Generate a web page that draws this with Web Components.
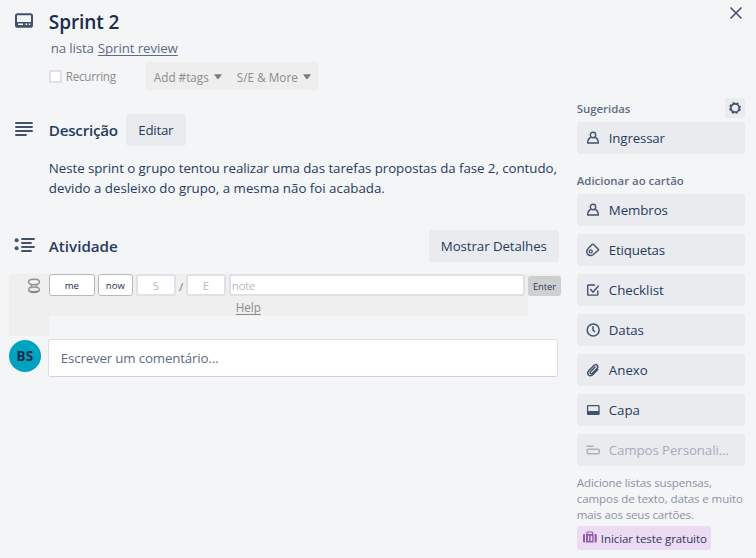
<!DOCTYPE html>
<html lang="pt-BR">
<head>
<meta charset="utf-8">
<title>Sprint 2</title>
<style>
html,body{margin:0;height:100%;overflow:hidden;background:#f4f5f7}
body{font-family:"Open Sans","Noto Sans",sans-serif;font-size:13.3px;line-height:20px;color:#263b60}
</style>
</head>
<body>
<card-dialog></card-dialog>
<script>
const define = (name, html, init) => customElements.define(name, class extends HTMLElement {
  connectedCallback() {
    if (this.shadowRoot) return;
    const t = document.createElement('template');
    t.innerHTML = html;
    this.attachShadow({mode: 'open'}).append(t.content.cloneNode(true));
    if (init) init(this, this.shadowRoot);
  }
});

/* Single-line label whose tracking is set so that it spans a given width. */
define('fit-text', `<style>:host{display:inline-block;white-space:nowrap;flex:none}span{display:inline-block;margin-left:-.2px}:host([underlined]) span{text-decoration:underline;text-decoration-thickness:1px;text-underline-offset:2px;text-decoration-skip-ink:none}</style><span><slot></slot></span>`,
(host, root) => {
  const s = root.querySelector('span'), w = parseFloat(host.getAttribute('w'));
  const n = host.textContent.length;
  if (w) {
    s.style.letterSpacing = (w - s.getBoundingClientRect().width) / n + 'px';
    host.style.width = w + 'px';
  }
});

const icons = {
  card: [20,16,'<rect x="2" y="1.200" width="16" height="12.600" rx="1.600" fill="none" stroke="currentColor" stroke-width="2"/><path d="M2 9h16v4.500H2z" fill="currentColor"/><path d="M4 11.300h5M11.500 11.300h1.700M14.800 11.300h1.400" stroke="#f4f5f7" stroke-width="1.600"/>'],
  lines: [20,16,'<path d="M2 2h16M2 6h16M2 10h16M2 14h10" stroke="currentColor" stroke-width="1.900" stroke-linecap="round"/>'],
  activity: [22,16,'<circle cx="2.600" cy="3.200" r="2" fill="currentColor"/><circle cx="2.600" cy="11.200" r="2" fill="currentColor"/><path d="M8 2h12M8 6h9M8 10h12M8 14h9" stroke="currentColor" stroke-width="1.900" stroke-linecap="round"/>'],
  close: [14,14,'<path d="M1.500 1.500l11 11M12.500 1.500l-11 11" stroke="currentColor" stroke-width="1.600"/>'],
  gear: [14,14,'<circle cx="7" cy="7" r="4.200" fill="none" stroke="currentColor" stroke-width="1.700"/><circle cx="7" cy="7" r="5.100" fill="none" stroke="currentColor" stroke-width="1.600" stroke-dasharray="2.100 1.906" stroke-dashoffset="-.95"/>'],
  person: [16,16,'<circle cx="8" cy="5" r="2.700" fill="none" stroke="currentColor" stroke-width="1.400"/><path d="M5.700 7.500C3.600 8.300 2.700 10 2.600 13h10.800c-.1-3-1-4.700-3.100-5.500" fill="none" stroke="currentColor" stroke-width="1.400" stroke-linejoin="round"/>'],
  tag: [16,16,'<path d="M8.300 2.300L13.300 7.300Q13.700 7.800 13.300 8.300L8 12.700C6.200 14 3.700 13.700 2.500 12C1.400 10.200 1.700 8.200 3 6.800L7.300 2.300Q7.800 1.900 8.300 2.300Z" fill="none" stroke="currentColor" stroke-width="1.400"/><circle cx="5.800" cy="9.400" r="1.500" fill="none" stroke="currentColor" stroke-width="1.300"/>'],
  check: [16,16,'<path d="M10 3H3.300Q2.700 3 2.700 3.600V12.500Q2.700 13.100 3.300 13.100H12.200Q12.800 13.100 12.800 12.500V8.500" fill="none" stroke="currentColor" stroke-width="1.400"/><path d="M5.200 7L8 10.200L13.600 3.700" fill="none" stroke="currentColor" stroke-width="1.500"/>'],
  clock: [16,16,'<circle cx="8.200" cy="8" r="6" fill="none" stroke="currentColor" stroke-width="1.500"/><path d="M8 4.200V8L10 10" fill="none" stroke="currentColor" stroke-width="1.500"/>'],
  clip: [16,16,'<path d="M12.800 7.600L8 12.500C6.500 14 4.600 14 3.500 12.900C2.400 11.800 2.500 10 3.900 8.500L8.900 3.500C10 2.400 11.300 2.300 12.200 3.200C13.100 4.100 13 5.400 12 6.500L7.300 11.200C6.600 11.900 5.900 11.900 5.400 11.500C4.900 11 4.900 10.200 5.600 9.500L10 5.100" fill="none" stroke="currentColor" stroke-width="1.450" stroke-linecap="round"/>'],
  cover: [16,16,'<rect x="2.600" y="3.600" width="11.400" height="8.800" rx=".7" fill="none" stroke="currentColor" stroke-width="1.300"/><path d="M2.500 9h11.600v3.500H2.500z" fill="currentColor"/>'],
  field: [16,16,'<path d="M1.500 4.200h7" stroke="currentColor" stroke-width="1.500"/><rect x="2.200" y="7.200" width="12" height="4.600" rx="1" fill="none" stroke="currentColor" stroke-width="1.500"/>'],
  bag: [16,14,'<path d="M5 3V1.600Q5 1 5.700 1h4.200Q10.600 1 10.600 1.600V3" fill="none" stroke="currentColor" stroke-width="1.200"/><path d="M2.200 3H3v8.500h-.8Q1 11.500 1 10.300V4.200Q1 3 2.200 3ZM4 3h7.600v8.500H4ZM12.600 3h1Q14.800 3 14.800 4.200v6.100q0 1.200-1.200 1.200h-1Z" fill="currentColor"/><path d="M6 4.700h1.100V10H6zM8.700 4.700h1.500V10H8.700z" fill="#eddbf4"/>'],
  hourglass: [14,16,'<path d="M3 6.300C5.500 7 5.500 9 3 9.700M11 6.300C8.500 7 8.500 9 11 9.700" fill="none" stroke="#999" stroke-width="1.300"/><ellipse cx="7" cy="4" rx="5.400" ry="2.700" fill="#f4f4f4" stroke="#929292" stroke-width="1.500"/><ellipse cx="7" cy="11.700" rx="5.400" ry="2.700" fill="#ececec" stroke="#999" stroke-width="1.500"/><path d="M2 12.200Q7 14.300 12 12.200Q11 14.600 7 14.600Q3 14.600 2 12.200Z" fill="#777"/>'],
  down: [8,6,'<path d="M0 .3h8L4.600 5H3.400z" fill="currentColor"/>']
};
define('ui-icon', `<style>:host{display:block;flex:none;color:#42526e}svg{display:block}</style>`, (h, r) => {
  const [w, ht, body] = icons[h.getAttribute('name')];
  r.innerHTML += `<svg width="${w}" height="${ht}" viewBox="0 0 ${w} ${ht}">${body}</svg>`;
});

define('soft-button', `<style>:host{display:flex;align-items:center;justify-content:center;box-sizing:border-box;height:32px;background:#eaebef;border-radius:3px;flex:none}</style><slot></slot>`);

define('side-button', `<style>:host{display:flex;align-items:center;box-sizing:border-box;height:32px;margin-bottom:8px;padding-left:8px;gap:8px;background:#eaebef;border-radius:3px}ui-icon{margin-left:-.5px;margin-right:.5px}:host([muted]){color:#a5adba}:host([muted]) ui-icon{color:#a9b1be}</style><slot></slot>`, (h, r) => {
  const i = document.createElement('ui-icon');
  i.setAttribute('name', h.getAttribute('icon'));
  r.querySelector('slot').before(i);
});

define('card-header', `<style>
:host{display:block;height:114px}
.t{display:flex;padding:8px 0 0 15px;height:30px}
ui-icon{margin:5px 15px 0 -1px}
.t fit-text{font-size:19px;font-weight:600;line-height:28px;color:#172b4d}
.l{display:flex;gap:4px;padding-left:51px;height:24px;line-height:20px;color:#5e6c84;font-size:13.3px}
.p{display:flex;align-items:center;padding-left:49px;height:28px;color:#8c8c8c;font-size:11.7px;line-height:16px}
i{box-sizing:border-box;width:13px;height:13px;border:2px solid #dfe1e6;background:#fff;margin-right:4px}
.b{box-sizing:border-box;margin-left:30px;width:172px;height:28px;display:flex;align-items:center;padding:2px 0 0 8px;background:#eeeeef}
.b ui-icon{color:#7d7d7d;margin:-1px 15px 0 5px}
</style>
<div class="t"><ui-icon name="card"></ui-icon><fit-text w="70.5">Sprint 2</fit-text></div>
<div class="l"><fit-text w="43">na lista</fit-text><fit-text underlined w="80">Sprint review</fit-text></div>
<div class="p"><i></i><fit-text w="50">Recurring</fit-text><div class="b"><fit-text w="55">Add #tags</fit-text><ui-icon name="down"></ui-icon><fit-text w="61">S/E &amp; More</fit-text><ui-icon name="down"></ui-icon></div></div>`);

define('section-head', `<style>
:host{display:flex;align-items:center;height:32px;padding-left:14px;box-sizing:border-box}
.i{width:35px}.i ui-icon{margin:-3px 0 0 0}
::slotted(fit-text){font-size:15.2px;font-weight:600}
::slotted(soft-button){margin-left:8px}
:host([icon=activity]) ::slotted(soft-button){margin-left:auto}
</style><div class="i"></div><slot></slot>`, (h, r) => {
  const i = document.createElement('ui-icon'); i.setAttribute('name', h.getAttribute('icon')); r.querySelector('.i').append(i);
});

define('spent-box', `<style>:host{display:flex;align-items:center;justify-content:center;box-sizing:border-box;height:22px;border:2px solid #dfe1e6;border-radius:3px;background:#fff;color:#bbb;font-size:11.5px;line-height:18px;flex:none;padding-top:1px}:host([solid]){border:1px solid #b9b9b9;color:#172b4d;font-size:9.5px}</style><slot></slot>`);

define('spent-bar', `<style>
:host{display:grid;grid-template-columns:40px 479px 33px;height:62px}
.a{background:#efefef;padding:4px 0 0 18px}
.m{background:#efefef;height:42px}
.r{display:flex;width:479px;height:22px}
.s{width:10px;text-align:center;font-size:11.5px;line-height:26px;color:#777}
.h{padding:3px 0 0 187px;font-size:11.7px;line-height:16px;color:#8c8c8c}
.h fit-text{display:block}
.e{background:#efefef;height:22px;padding-top:2px;box-sizing:border-box}
.e div{height:20px;background:#cfcfcf;border-radius:3px;font-size:9.3px;text-align:center;line-height:21px}
</style><div class="a"><ui-icon name="hourglass"></ui-icon></div>
<div class="m"><div class="r"><spent-box solid style="width:46px;margin-right:3px"><fit-text w="14">me</fit-text></spent-box><spent-box solid style="width:35px;margin-right:3px"><fit-text w="19">now</fit-text></spent-box><spent-box style="width:40px">S</spent-box><div class="s">/</div><spent-box style="width:40px;margin-right:3px">E</spent-box><spent-box style="width:296px;justify-content:flex-start;padding-left:1px"><fit-text w="23">note</fit-text></spent-box></div><div class="h"><fit-text underlined w="25">Help</fit-text></div></div>
<div class="e"><div><fit-text w="23">Enter</fit-text></div></div>`);

define('comment-box', `<style>
:host{display:flex;gap:7px;padding:3px 0 0 9px}
b{display:block;width:32px;height:32px;margin-top:1px;border-radius:50%;background:#00a3bf;text-align:center;line-height:32px;font-size:13.4px;font-weight:700;color:#172b4d}
div{box-sizing:border-box;width:510px;height:38px;padding:8px 12px;background:#fff;border:1px solid #dcdfe6;border-bottom-color:#ced2de;border-radius:3px;color:#5e6c84}
</style><b><fit-text w="17">BS</fit-text></b><div><fit-text w="157.5">Escrever um comentário...</fit-text></div>`);

define('card-main', `<style>
:host{display:block;width:567px}
.d{padding:12px 0 0 49px;height:84px;box-sizing:border-box}.d fit-text{display:block}
section-head[icon=activity]{width:559px}
spent-bar{margin:12px 0 0 9px}
</style><card-header></card-header>
<section-head icon="lines"><fit-text w="69">Descrição</fit-text><soft-button style="width:60px"><fit-text w="35">Editar</fit-text></soft-button></section-head>
<div class="d"><fit-text w="508">Neste sprint o grupo tentou realizar uma das tarefas propostas da fase 2, contudo,</fit-text><fit-text w="336">devido a desleixo do grupo, a mesma não foi acabada.</fit-text></div>
<section-head icon="activity"><fit-text w="69">Atividade</fit-text><soft-button style="width:130px"><fit-text w="106">Mostrar Detalhes</fit-text></soft-button></section-head>
<spent-bar></spent-bar><comment-box></comment-box>`);

define('card-side', `<style>
:host{display:block;width:168px;margin-left:10px}
.x{height:98px;display:flex;justify-content:flex-end;box-sizing:border-box;padding:6px 2px 0 0}
.h{display:flex;justify-content:space-between;height:24px;align-items:flex-start;font-size:11.4px;font-weight:600;color:#5e6c84}
.h>fit-text{margin-top:1px}
.g{width:20px;height:20px;background:#eaebef;border-radius:3px;display:flex;align-items:center;justify-content:center}
.g ui-icon{margin-left:-1px}
.c{padding-top:8px;margin-top:8px}
.n{font-size:11.5px;line-height:16px;color:#8993a4;margin-top:9px}.n fit-text{display:block}
.p{display:flex;align-items:center;box-sizing:border-box;width:134px;height:24px;margin-top:3px;padding-left:5px;gap:3px;border-radius:3px;background:#eddbf4;font-size:11.5px}
.p ui-icon{color:#8f5da5;margin:0 .5px 0 -.5px}.p fit-text{margin-top:1px}
</style>
<div class="x"><ui-icon name="close"></ui-icon></div>
<div class="h"><fit-text w="53.5">Sugeridas</fit-text><div class="g"><ui-icon name="gear"></ui-icon></div></div>
<side-button icon="person"><fit-text w="56">Ingressar</fit-text></side-button>
<div class="h c"><fit-text w="107">Adicionar ao cartão</fit-text></div>
<side-button icon="person"><fit-text w="59">Membros</fit-text></side-button>
<side-button icon="tag"><fit-text w="56">Etiquetas</fit-text></side-button>
<side-button icon="check"><fit-text w="55">Checklist</fit-text></side-button>
<side-button icon="clock"><fit-text w="35">Datas</fit-text></side-button>
<side-button icon="clip"><fit-text w="39">Anexo</fit-text></side-button>
<side-button icon="cover"><fit-text w="31">Capa</fit-text></side-button>
<side-button icon="field" muted><fit-text w="120">Campos Personali...</fit-text></side-button>
<div class="n"><fit-text w="135">Adicione listas suspensas,</fit-text><fit-text w="166">campos de texto, datas e muito</fit-text><fit-text w="117">mais aos seus cartões.</fit-text></div>
<div class="p"><ui-icon name="bag"></ui-icon><fit-text w="106">Iniciar teste gratuito</fit-text></div>`);

define('card-dialog', `<style>:host{display:flex;width:756px;height:558px;background:#f4f5f7}</style><card-main></card-main><card-side></card-side>`);
</script>
</body>
</html>
